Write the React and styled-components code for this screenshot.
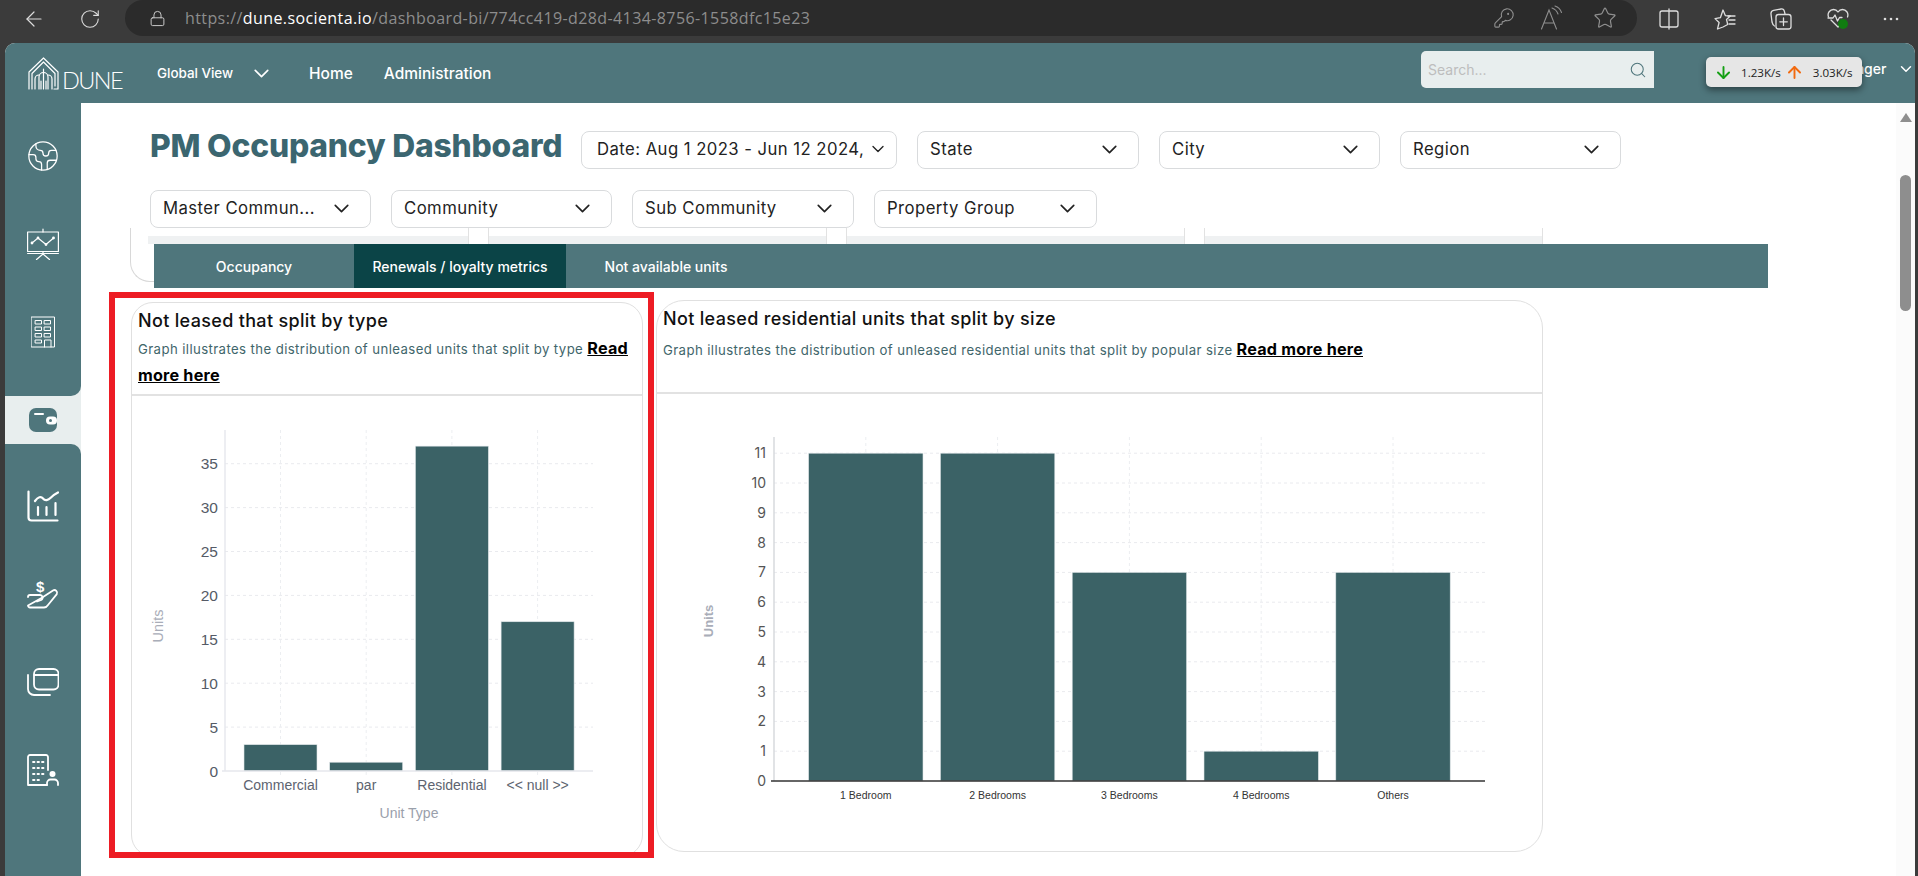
import React from "react";
import styled, { createGlobalStyle } from "styled-components";
import { ArrowLeft, RotateCw, Lock, KeyRound, Star, ChevronDown, Search, ArrowDown, ArrowUp, Earth } from "lucide-react";

const UI = `Inter, "Open Sans", sans-serif`;
const TEAL = "#4f767c";
const BAR = "#3b6266";

const Global = createGlobalStyle`
  html, body { margin: 0; padding: 0; height: 100%; overflow: hidden; background: #3b3b3b; }
  body { font-family: ${UI}; }
  * { box-sizing: border-box; }
`;

const Page = styled.div`
  height: 876px;
  display: flex;
  flex-direction: column;
  background: #3b3b3b;
`;

const BrowserBar = styled.div`
  height: 43px;
  flex: none;
  display: flex;
  align-items: flex-start;
  color: #dcdcdc;
`;
const NavIcon = styled.span`
  width: ${(p) => p.$w}px;
  height: 37px;
  flex: none;
  display: flex;
  align-items: center;
  justify-content: center;
`;
const UrlPill = styled.div`
  width: 1512px;
  margin-left: ${(p) => p.$ml || 0}px;
  height: 36px;
  flex: none;
  background: #2b2b2b;
  border-radius: 18px;
  display: flex;
  align-items: center;
  padding-left: 24px;
  color: #c9c9c9;
`;
const UrlText = styled.span`
  margin-left: 19px;
  font: 16px "Open Sans", sans-serif;
  color: #8d8d8d;
  letter-spacing: 0.4px;
  white-space: nowrap;
  b { font-weight: 400; color: #fff; }
`;
const PillTools = styled.div`
  margin-left: auto;
  display: flex;
  align-items: center;
  gap: 25px;
  padding-right: 20px;
  color: #8f8f8f;
`;
const BrowserTools = styled.div`
  display: flex;
  align-items: center;
  height: 37px;
  gap: 34.5px;
  margin-left: 22px;
  color: #dedede;
`;

const AppShell = styled.div`
  flex: 1;
  min-height: 0;
  margin: 0 3px 0 5px;
  border-radius: 10px 10px 0 0;
  overflow: hidden;
  position: relative;
  display: flex;
  flex-direction: column;
  background: #fff;
`;

const Header = styled.header`
  height: 60px;
  flex: none;
  background: ${TEAL};
  color: #fff;
  display: flex;
  align-items: center;
  padding-left: 23px;
`;
const Logo = styled.div`
  display: flex;
  align-items: flex-end;
  width: 90px;
  flex: none;
  margin-top: 1px;
  svg { flex: none; }
`;
const LogoWord = styled.span`
  font: 300 23.5px/19px Lato, sans-serif;
  letter-spacing: -1.6px;
  margin-left: 2px;
`;
const GlobalView = styled.div`
  margin-left: 39px;
  width: 152px;
  flex: none;
  display: flex;
  align-items: center;
  font: 500 13.4px ${UI};
  gap: 16px;
`;
const NavLink = styled.a`
  font: 500 15.5px ${UI};
  margin-right: 31px;
  white-space: nowrap;
`;
const SearchBox = styled.div`
  margin-left: auto;
  margin-top: -7px;
  width: 233px;
  height: 37px;
  flex: none;
  background: #e8eeee;
  border-radius: 5px 0 0 5px;
  display: flex;
  align-items: center;
  justify-content: space-between;
  padding: 0 7px;
  color: #bdbdbd;
  font: 400 14px ${UI};
  svg { color: ${TEAL}; }
`;
const UserMenu = styled.div`
  margin-left: 173px;
  margin-top: -9px;
  width: 88px;
  flex: none;
  display: flex;
  align-items: center;
  justify-content: space-between;
  font: 500 14px ${UI};
`;
const SpeedWidget = styled.div`
  position: absolute;
  top: 14px;
  right: 53px;
  width: 156px;
  height: 30px;
  background: #e6e6e6;
  border-radius: 5px;
  box-shadow: 0 3px 7px rgba(0, 0, 0, 0.45);
  display: flex;
  align-items: center;
  padding-left: 8px;
  font: 11.6px "Open Sans", sans-serif;
  color: #222;
`;
const SpeedValue = styled.span`
  margin-left: ${(p) => p.$ml}px;
  white-space: nowrap;
`;
const SpeedArrow = styled.span`
  display: flex;
  margin-left: ${(p) => p.$ml || 0}px;
  color: ${(p) => p.$c};
`;

const Body = styled.div`
  flex: 1;
  min-height: 0;
  display: flex;
`;
const Sidebar = styled.nav`
  width: 76px;
  flex: none;
  display: flex;
  flex-direction: column;
  background: #e8eeee;
`;
const SideGroup = styled.div`
  background: ${TEAL};
  display: flex;
  flex-direction: column;
  height: ${(p) => p.$h}px;
  flex: none;
  padding-top: ${(p) => p.$pt}px;
  border-radius: ${(p) => p.$r};
`;
const SideItem = styled.div`
  height: 88px;
  flex: none;
  display: flex;
  align-items: center;
  justify-content: center;
  color: #fff;
`;
const ActiveItem = styled.div`
  height: 48px;
  flex: none;
  background: #e8eeee;
  display: flex;
  align-items: center;
  justify-content: center;
`;

const Main = styled.main`
  flex: 1;
  min-width: 0;
  overflow: hidden;
  background: #fff;
`;
const FilterRow = styled.div`
  display: flex;
  align-items: center;
  gap: 20px;
  padding-left: 69px;
  padding-top: ${(p) => p.$pt}px;
`;
const Title = styled.h1`
  margin: -9px 0 0;
  width: 411px;
  height: 38px;
  flex: none;
  font: 800 31.8px/38px ${UI};
  letter-spacing: -0.2px;
  color: #3b6670;
  white-space: nowrap;
`;
const Select = styled.div`
  width: ${(p) => p.$w}px;
  height: 38px;
  flex: none;
  border: 1px solid #d9dbdd;
  border-radius: 8px;
  background: #fff;
  display: flex;
  align-items: center;
  justify-content: space-between;
  padding: 0 ${(p) => p.$pr}px 2px ${(p) => p.$pl || 12}px;
  font: 400 16.7px ${UI};
  letter-spacing: 0.45px;
  color: #222;
  white-space: nowrap;
`;

const PeekCard = styled.div`
  margin-left: 49px;
  width: 1500px;
  height: 54px;
  border-left: 1px solid #d8d8d8;
  border-bottom: 1px solid #d8d8d8;
  border-bottom-left-radius: 20px;
  display: flex;
  padding-left: 17px;
`;
const PeekSegment = styled.div`
  width: ${(p) => p.$w}px;
  margin-right: ${(p) => p.$mr}px;
  height: 16px;
  flex: none;
  border-left: ${(p) => (p.$first ? "none" : "1px solid #e2e2e2")};
  border-right: 1px solid #e2e2e2;
  background: linear-gradient(#fff 50%, #eff1f2 50%);
`;
const TabBar = styled.div`
  margin: -38px 0 0 73px;
  width: 1614px;
  height: 44px;
  background: ${TEAL};
  position: relative;
  display: flex;
`;
const Tab = styled.div`
  width: ${(p) => p.$w}px;
  display: flex;
  align-items: center;
  justify-content: center;
  color: #fff;
  font: 500 14px ${UI};
  background: ${(p) => (p.$active ? "#0b4447" : "transparent")};
  white-space: nowrap;
`;

const Cards = styled.div`
  display: flex;
  align-items: flex-start;
  margin: 4px 0 0 28px;
`;
const Highlight = styled.div`
  width: 545px;
  height: 566px;
  flex: none;
  border: 6px solid #ed1c24;
  padding: 4px 5px 0 16px;
  overflow: hidden;
`;
const Card = styled.section`
  width: ${(p) => p.$w}px;
  height: ${(p) => p.$h}px;
  flex: none;
  margin: ${(p) => p.$m || 0};
  border: 1px solid #e0e0e0;
  border-radius: ${(p) => p.$r}px;
  overflow: hidden;
  background: #fff;
`;
const CardHead = styled.div`
  height: 93px;
  padding: 6px 6px 0;
  border-bottom: 2px solid #e2e2e2;
`;
const CardTitle = styled.h2`
  margin: 0;
  font: 500 18px/24px ${UI};
  letter-spacing: 0.33px;
  color: #111;
  white-space: nowrap;
`;
const CardDesc = styled.p`
  margin: ${(p) => p.$mt}px 0 0;
  font: 400 13.2px/26px ${UI};
  color: #3f666b;
  letter-spacing: 0.4px;
`;
const ReadMore = styled.a`
  font: 700 16.2px/26px ${UI};
  color: #000;
  letter-spacing: 0.2px;
  text-decoration: underline;
`;
const ChartSvg = styled.svg`
  display: block;
`;
const TickText = styled.text`
  font-family: ${(p) => p.$f || `"Liberation Sans", Arial, sans-serif`};
  font-size: ${(p) => p.$s}px;
  fill: ${(p) => p.$c};
  font-weight: ${(p) => p.$b || 400};
`;

const Scroll = styled.div`
  width: 19px;
  flex: none;
  background: #fbfbfb;
  display: flex;
  flex-direction: column;
  align-items: center;
  padding-top: 10px;
`;
const ScrollArrow = styled.div`
  width: 0;
  height: 0;
  border-left: 6.5px solid transparent;
  border-right: 6.5px solid transparent;
  border-bottom: 9px solid #8e8e8e;
`;
const ScrollThumb = styled.div`
  width: 11px;
  height: 136px;
  margin-top: 53px;
  border-radius: 6px;
  background: #8e8e8e;
`;

const I = ({ w = 32, h = 32, sw = 1.2, children, ...r }) => (
  <svg width={w} height={h} viewBox={`0 0 ${w} ${h}`} fill="none" stroke="currentColor" strokeWidth={sw} strokeLinecap="round" strokeLinejoin="round" {...r}>
    {children}
  </svg>
);

const LogoMark = () => (
  <I w={32} h={33} sw={1.2}>
    <path d="M1 32V15L15.5 1 30 15v17h-4" />
    <path d="M4 32V16.5L15.5 5 27 16.5V29" />
    <path d="M7 32V22a4 4 0 0 1 4-4M24 32V22a4 4 0 0 0-4-4" />
    <path d="M11 32V20a4.5 4.5 0 0 1 9 0v12" />
    <path d="M15.5 12v20M13 32v-8M18 32v-8" />
  </I>
);
const Presentation = () => (
  <I w={32} h={32}>
    <path d="M16 1v3" />
    <rect x="0.6" y="4" width="30.8" height="19.5" />
    <path d="M0.6 25.5h30.8" />
    <path d="M5 15l6-5 8 6.5 7.5-6.5" />
    <circle cx="5" cy="15" r="0.8" fill="currentColor" />
    <circle cx="11" cy="10" r="0.8" fill="currentColor" />
    <circle cx="19" cy="16.5" r="0.8" fill="currentColor" />
    <circle cx="26.5" cy="10" r="0.8" fill="currentColor" />
    <path d="M16 26l-6.5 5.5M16 26l6.5 5.5M16 23.5V26" />
  </I>
);
const Tower = () => (
  <I w={24} h={32} sw={1}>
    <rect x="0.5" y="1" width="23" height="30" />
    <rect x="4.5" y="4.5" width="6" height="3.5" />
    <rect x="13.5" y="4.5" width="6" height="3.5" />
    <rect x="4.5" y="11" width="6" height="3.5" />
    <rect x="13.5" y="11" width="6" height="3.5" />
    <rect x="4.5" y="17.5" width="6" height="3.5" />
    <rect x="13.5" y="17.5" width="6" height="3.5" />
    <rect x="4.5" y="24" width="6" height="3" />
    <path d="M13.5 31V24h6.5v7" />
  </I>
);
const WalletIcon = () => (
  <svg width="28" height="24" viewBox="0 0 28 24">
    <rect x="0" y="0" width="28" height="24" rx="7" fill={TEAL} />
    <path d="M6 6h8" stroke="#fff" strokeWidth="2" strokeLinecap="round" />
    <rect x="17" y="8.5" width="11" height="8" rx="4" fill="#fff" />
    <circle cx="21.5" cy="12.5" r="1.5" fill={TEAL} />
  </svg>
);
const ChartIcon = () => (
  <I w={32} h={32} sw={2.2}>
    <path d="M1.5 1.5v26a3 3 0 0 0 3 3h26" />
    <path d="M8 11c3-4 6-5 8-2.5s5 2 8-1 5-4 7-5" />
    <path d="M11 25v-8M19.5 25v-8M28.5 25V13" />
  </I>
);
const HandIcon = () => (
  <svg width="32" height="30" viewBox="0 0 32 30" fill="none" stroke="currentColor" strokeWidth="1.8" strokeLinecap="round" strokeLinejoin="round">
    <text x="9" y="13" fill="currentColor" stroke="none" fontFamily="Liberation Sans, sans-serif" fontWeight="700" fontSize="15">$</text>
    <path d="M1 18a2 2 0 0 1 2-2h10a2.6 2.6 0 0 1 1.2 4.9L10 22.5" />
    <path d="M14.5 19L26 11.5a2.7 2.7 0 0 1 3.8 3.6L21 26a5 5 0 0 1-4 2.5H3a2 2 0 0 1-2-2z" />
  </svg>
);
const CardsIcon = () => (
  <I w={32} h={28} sw={1.8}>
    <rect x="7" y="1" width="24.5" height="20.5" rx="5" />
    <path d="M7.5 7h23.5" />
    <path d="M1 7v14a6 6 0 0 0 6 6h16" />
  </I>
);
const BuildingPerson = () => (
  <I w={32} h={32} sw={1.8}>
    <path d="M21 16V3a2 2 0 0 0-2-2H3a2 2 0 0 0-2 2v28h19" />
    <path d="M6 8h1.5M10.5 8H12M15 8h1.5M6 14h1.5M10.5 14H12M15 14h1.5M6 20h1.5M10.5 20H12M15 20h1.5M6 26h1.5M10.5 26H12" />
    <circle cx="25.5" cy="20" r="3" fill="currentColor" stroke="none" />
    <path d="M20 31v-2a3.5 3.5 0 0 1 3.5-3.5h4A3.5 3.5 0 0 1 31 29v2" />
  </I>
);
const ReadAloud = () => (
  <svg width="28" height="26" viewBox="0 0 28 26" fill="none" stroke="currentColor" strokeWidth="1.1" strokeLinecap="round">
    <path d="M1.5 24L9 5l7.5 19M4 18h10" />
    <path d="M12 3c3 1 5 3 6 6M15 1c3 1 5.5 3.5 6.5 6.5" />
  </svg>
);
const SplitIcon = () => (
  <I w={20} h={22} sw={1.3}>
    <path d="M9 3H3a2 2 0 0 0-2 2v12a2 2 0 0 0 2 2h6M11 3h6a2 2 0 0 1 2 2v12a2 2 0 0 1-2 2h-6M10 1v20" />
  </I>
);
const FavList = () => (
  <I w={22} h={22} sw={1.3}>
    <path d="M9 2l2.3 5.6 5 .4-3.8 3.4 1.2 5.1L9 19l-5.5 2 1.6-6.5L1 10.6l5.4-.9z" />
    <path d="M14 8h7M15 12h6M15 16h6" />
  </I>
);
const Collections = () => (
  <I w={22} h={22} sw={1.3}>
    <path d="M4.5 18C3 17.5 2.5 16 2 14L1 6c-.2-2 .8-3.3 2.6-3.6L11 1c1.8-.3 3 .6 3.4 2.4L15 6" />
    <rect x="6" y="6.5" width="15" height="14.5" rx="2.5" />
    <path d="M13.5 10v7.5M9.8 13.8h7.5" />
  </I>
);
const HeartStatus = () => (
  <svg width="22" height="22" viewBox="0 0 22 22" fill="none" stroke="currentColor" strokeWidth="1.3" strokeLinecap="round" strokeLinejoin="round">
    <path d="M14 16l-3 3-7-7M1.5 9C0 5 3 1.5 6.5 1.5c2 0 3.5 1 4.5 2.5 1-1.5 2.5-2.5 4.5-2.5C19 1.5 22 5 20.5 9" />
    <path d="M1 10h5l2-3 2.5 6 2-3.5H15" />
    <circle cx="16" cy="16" r="5" fill="#107c10" stroke="none" />
  </svg>
);
const Dots = () => (
  <svg width="16" height="4" viewBox="0 0 16 4"><g fill="currentColor"><circle cx="2" cy="2" r="1.3" /><circle cx="8" cy="2" r="1.3" /><circle cx="14" cy="2" r="1.3" /></g></svg>
);

const BarChart = ({ w, h, data, x0, base, top, right, unit, bar0, step, bw, yMax, yStep, axisColor, numSize, catSize, catY, catColor, numColor, numX, numFont, unitsX, unitsY, unitsSize, unitsBold, xTitle, bold }) => {
  const ticks = [];
  for (let v = 0; v <= yMax; v += yStep) ticks.push(v);
  return (
    <ChartSvg width={w} height={h} viewBox={`0 0 ${w} ${h}`}>
      {ticks.filter((v) => v > 0).map((v) => (
        <line key={v} x1={x0} x2={right} y1={base - v * unit} y2={base - v * unit} stroke="#e9eaee" strokeDasharray="3 3" />
      ))}
      {data.map((d, i) => (
        <line key={d.label} x1={bar0 + i * step + bw / 2} x2={bar0 + i * step + bw / 2} y1={top} y2={base + 4} stroke="#eceef1" strokeDasharray="3 3" />
      ))}
      {data.map((d, i) => (
        <rect key={d.label} x={bar0 + i * step} y={base - d.value * unit} width={bw} height={d.value * unit} fill={BAR} stroke="#dfe6e8" strokeWidth="0.6" />
      ))}
      <line x1={x0} x2={x0} y1={top} y2={base} stroke={bold ? "#d5d7db" : "#e6e7ed"} strokeWidth="1.4" />
      <line x1={x0 - 3} x2={right} y1={base} y2={base} stroke={axisColor} strokeWidth={bold ? 1.6 : 1.4} />
      {ticks.map((v) => (
        <TickText key={v} x={numX} y={base - v * unit + numSize * 0.36} textAnchor="end" $s={numSize} $c={numColor} $f={numFont}>{v}</TickText>
      ))}
      {data.map((d, i) => (
        <TickText key={d.label} x={bar0 + i * step + bw / 2} y={catY} textAnchor="middle" $s={catSize} $c={catColor}>{d.label}</TickText>
      ))}
      <TickText x={unitsX} y={unitsY} textAnchor="middle" transform={`rotate(-90 ${unitsX} ${unitsY})`} $s={unitsSize} $c="#a9adb8" $b={unitsBold}>Units</TickText>
      {xTitle && <TickText x={xTitle.x} y={xTitle.y} textAnchor="middle" $s={14} $c="#9aa0ab">Unit Type</TickText>}
    </ChartSvg>
  );
};

const typeData = [
  { label: "Commercial", value: 3 },
  { label: "par", value: 1 },
  { label: "Residential", value: 37 },
  { label: "<< null >>", value: 17 },
];
const sizeData = [
  { label: "1 Bedroom", value: 11 },
  { label: "2 Bedrooms", value: 11 },
  { label: "3 Bedrooms", value: 7 },
  { label: "4 Bedrooms", value: 1 },
  { label: "Others", value: 7 },
];

const Chev = ({ size = 25 }) => <ChevronDown size={size} strokeWidth={1.6} />;

export default function App() {
  return (
    <Page>
      <Global />
      <BrowserBar>
        <NavIcon $w={68}><ArrowLeft size={24} strokeWidth={1.2} /></NavIcon>
        <NavIcon $w={44}><RotateCw size={22} strokeWidth={1.2} /></NavIcon>
        <UrlPill $ml={13}>
          <Lock size={17} strokeWidth={1.4} />
          <UrlText>https://<b>dune.socienta.io</b>/dashboard-bi/774cc419-d28d-4134-8756-1558dfc15e23</UrlText>
          <PillTools>
            <KeyRound size={22} strokeWidth={1.2} />
            <ReadAloud />
            <Star size={24} strokeWidth={1.2} />
          </PillTools>
        </UrlPill>
        <BrowserTools>
          <SplitIcon />
          <FavList />
          <Collections />
          <HeartStatus />
          <Dots />
        </BrowserTools>
      </BrowserBar>
      <AppShell>
        <Header>
          <Logo><LogoMark /><LogoWord>DUNE</LogoWord></Logo>
          <GlobalView>Global View <ChevronDown size={25} strokeWidth={1.6} /></GlobalView>
          <NavLink>Home</NavLink>
          <NavLink>Administration</NavLink>
          <SearchBox>Search...<Search size={18} strokeWidth={1.4} /></SearchBox>
          <UserMenu>Manager<ChevronDown size={18} strokeWidth={2} /></UserMenu>
        </Header>
        <SpeedWidget>
          <SpeedArrow $c="#14a014"><ArrowDown size={19} strokeWidth={2.4} /></SpeedArrow>
          <SpeedValue $ml={8}>1.23K/s</SpeedValue>
          <SpeedArrow $c="#f26a0f" $ml={4}><ArrowUp size={19} strokeWidth={2.4} /></SpeedArrow>
          <SpeedValue $ml={9}>3.03K/s</SpeedValue>
        </SpeedWidget>
        <Body>
          <Sidebar>
            <SideGroup $h={293} $pt={9} $r="0 0 10px 0">
              <SideItem><Earth size={34} strokeWidth={0.9} /></SideItem>
              <SideItem><Presentation /></SideItem>
              <SideItem><Tower /></SideItem>
            </SideGroup>
            <ActiveItem><WalletIcon /></ActiveItem>
            <SideGroup $h={433} $pt={18} $r="0 10px 0 0">
              <SideItem><ChartIcon /></SideItem>
              <SideItem><HandIcon /></SideItem>
              <SideItem><CardsIcon /></SideItem>
              <SideItem><BuildingPerson /></SideItem>
            </SideGroup>
          </Sidebar>
          <Main>
            <FilterRow $pt={28}>
              <Title>PM Occupancy Dashboard</Title>
              <Select $w={316} $pr={8} $pl={15}>Date: Aug 1 2023 - Jun 12 2024,<Chev size={20} /></Select>
              <Select $w={222} $pr={16}>State<Chev /></Select>
              <Select $w={221} $pr={16}>City<Chev /></Select>
              <Select $w={221} $pr={16}>Region<Chev /></Select>
            </FilterRow>
            <FilterRow $pt={21}>
              <Select $w={221} $pr={16}>Master Commun...<Chev /></Select>
              <Select $w={221} $pr={16}>Community<Chev /></Select>
              <Select $w={222} $pr={16}>Sub Community<Chev /></Select>
              <Select $w={223} $pr={16}>Property Group<Chev /></Select>
            </FilterRow>
            <PeekCard>
              <PeekSegment $first $w={321} $mr={19} />
              <PeekSegment $w={339} $mr={19} />
              <PeekSegment $w={339} $mr={19} />
              <PeekSegment $w={339} $mr={0} />
            </PeekCard>
            <TabBar>
              <Tab $w={200}>Occupancy</Tab>
              <Tab $w={212} $active>Renewals / loyalty metrics</Tab>
              <Tab $w={200}>Not available units</Tab>
            </TabBar>
            <Cards>
              <Highlight>
                <Card $w={512} $h={555} $r={22}>
                  <CardHead>
                    <CardTitle>Not leased that split by type</CardTitle>
                    <CardDesc $mt={2}>Graph illustrates the distribution of unleased units that split by type <ReadMore>Read more here</ReadMore></CardDesc>
                  </CardHead>
                  <BarChart w={510} h={458} data={typeData} x0={93} base={375} top={34} right={461} unit={8.78} bar0={112} step={85.7} bw={73} yMax={35} yStep={5} axisColor="#e6e7ed" numSize={15.5} catSize={14} catY={394} catColor="#5d6470" numColor="#555b66" numX={86} unitsX={31} unitsY={230} unitsSize={14.5} xTitle={{ x: 277, y: 422 }} />
                </Card>
              </Highlight>
              <Card $w={887} $h={552} $r={28} $m="8px 0 0 2px">
                <CardHead>
                  <CardTitle>Not leased residential units that split by size</CardTitle>
                  <CardDesc $mt={5}>Graph illustrates the distribution of unleased residential units that split by popular size <ReadMore>Read more here</ReadMore></CardDesc>
                </CardHead>
                <BarChart w={885} h={458} data={sizeData} x0={117} base={387} top={43} right={828} unit={29.8} bar0={151.6} step={131.8} bw={114.4} yMax={11} yStep={1} axisColor="#333" numSize={14} catSize={10.5} catY={405} catColor="#333" numColor="#555" numX={109} numFont={UI} unitsX={56} unitsY={227} unitsSize={13} unitsBold={700} bold />
              </Card>
            </Cards>
          </Main>
          <Scroll>
            <ScrollArrow />
            <ScrollThumb />
          </Scroll>
        </Body>
      </AppShell>
    </Page>
  );
}
